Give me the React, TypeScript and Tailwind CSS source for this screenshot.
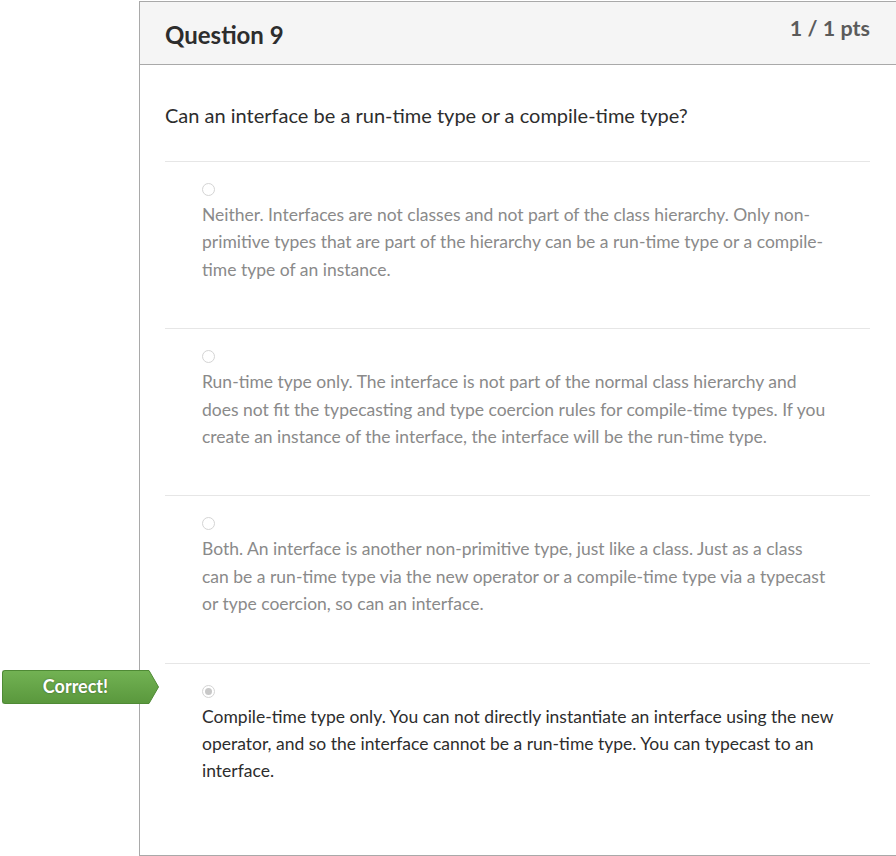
const answers = [
  {
    text: "Neither. Interfaces are not classes and not part of the class hierarchy. Only non-primitive types that are part of the hierarchy can be a run-time type or a compile-time type of an instance.",
    selected: false,
    width: "w-[633px]",
  },
  {
    text: "Run-time type only. The interface is not part of the normal class hierarchy and does not fit the typecasting and type coercion rules for compile-time types. If you create an instance of the interface, the interface will be the run-time type.",
    selected: false,
    width: "w-[633px]",
  },
  {
    text: "Both. An interface is another non-primitive type, just like a class. Just as a class can be a run-time type via the new operator or a compile-time type via a typecast or type coercion, so can an interface.",
    selected: false,
    width: "w-[630px]",
  },
  {
    text: "Compile-time type only. You can not directly instantiate an interface using the new operator, and so the interface cannot be a run-time type. You can typecast to an interface.",
    selected: true,
    width: "w-[633px]",
  },
];

const CorrectBadge = () => (
  <div className="absolute left-[1px] top-[6px] flex items-center">
    <div className="flex h-[34px] w-[146px] items-center justify-center rounded-l-[3px] border border-r-0 border-[#4f8a35] bg-gradient-to-b from-[#72b253] to-[#5a983d] pb-px text-[18px] font-bold text-white [text-shadow:0_0_2px_rgba(0,0,0,0.4)]">
      Correct!
    </div>
    <svg width="12" height="34" viewBox="0 0 12 34" className="-ml-px">
      <defs>
        <linearGradient id="g" x1="0" y1="0" x2="0" y2="1">
          <stop offset="0" stopColor="#72b253" />
          <stop offset="1" stopColor="#5a983d" />
        </linearGradient>
      </defs>
      <path d="M0 0.5 L2 0.5 L11.5 17 L2 33.5 L0 33.5 Z" fill="url(#g)" stroke="#4f8a35" strokeWidth="1" />
      <rect x="0" y="1" width="1.5" height="32" fill="url(#g)" />
    </svg>
  </div>
);

const Radio = ({ checked }: { checked: boolean }) => (
  <span className="flex h-[13px] w-[13px] items-center justify-center rounded-full border border-[#d4d4d4] bg-white">
    {checked && <span className="h-[7px] w-[7px] rounded-full bg-[#c8c8c8]" />}
  </span>
);

export default function App() {
  return (
    <div
      className="relative h-[856px] w-[896px] overflow-hidden bg-white"
      style={{ fontFamily: "Lato, 'Open Sans', sans-serif" }}
    >
      <div className="ml-[139px] mt-[1px] h-[855px] w-[770px] border border-[#a9a9a9] bg-white">
        <div className="flex h-[63px] justify-between border-b border-[#a9a9a9] bg-[#f5f5f5] pl-[25px] pr-[38px]">
          <h2 className="mt-[17px] text-[24px] font-bold leading-[32px] text-[#2d2d2d]">Question 9</h2>
          <span className="mt-[11px] text-[21.5px] font-bold leading-[30px] text-[#5b5b5b]">1 / 1 pts</span>
        </div>
        <div className="px-[25px] pr-[38px]">
          <p className="pt-[36px] pb-[32px] text-[20px] leading-[28px] text-[#2d2d2d]">
            Can an interface be a run-time type or a compile-time type?
          </p>
          <div>
            {answers.map((a, i) => (
              <div key={i} className="relative border-t border-[#e6e6e6] pl-[37px] pt-[21px] pb-[45px]">
                {a.selected && (
                  <div className="absolute left-[-164px] top-0">
                    <CorrectBadge />
                  </div>
                )}
                <Radio checked={a.selected} />
                <p
                  className={`mt-[5px] ${a.width} text-[17.5px] leading-[27.4px] ${
                    a.selected ? "text-[#2d2d2d]" : "text-[#8a8a8a]"
                  }`}
                >
                  {a.text}
                </p>
              </div>
            ))}
          </div>
        </div>
      </div>
    </div>
  );
}
